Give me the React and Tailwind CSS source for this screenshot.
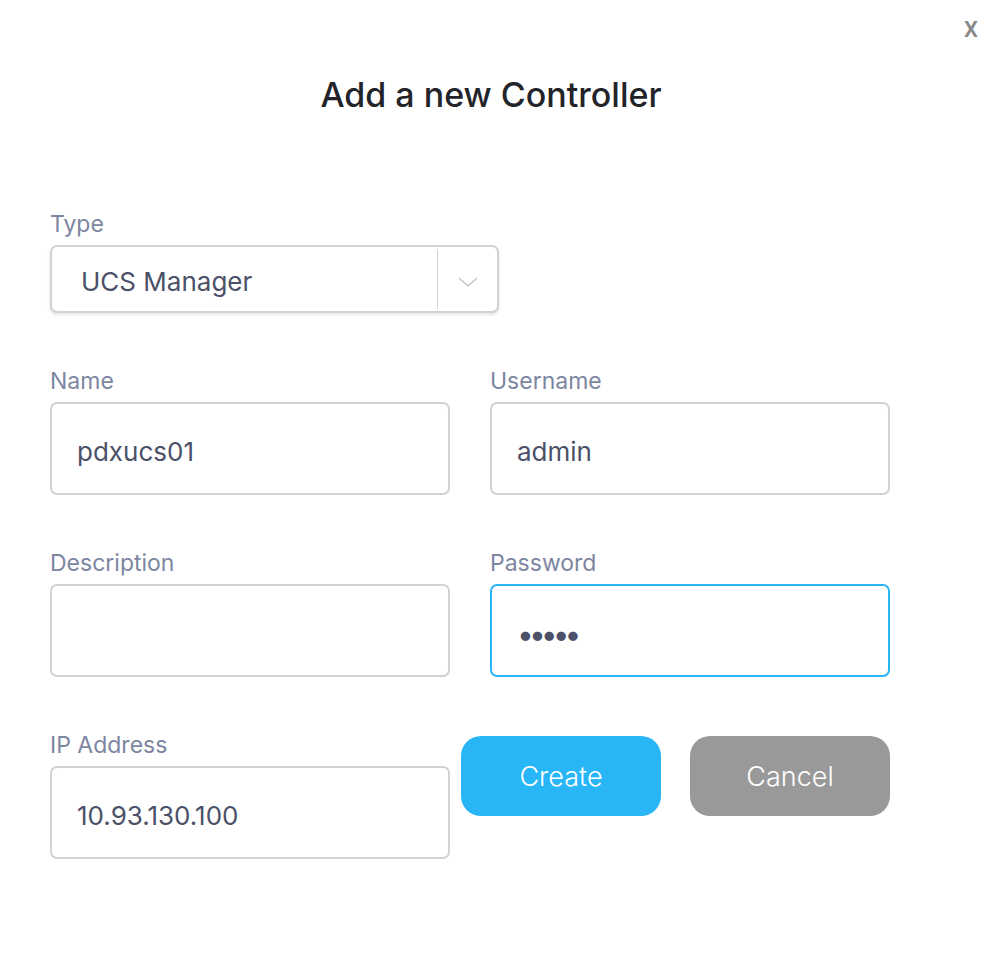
import React from "react";

const Label = ({ children }) => (
  <label className="block text-[23px] leading-[28px] text-[#7d86a1] mb-[7px]">{children}</label>
);

const Field = ({ label, value, type = "text", focused = false }) => (
  <div>
    <Label>{label}</Label>
    <input
      type={type}
      defaultValue={value}
      className={`w-full h-[93px] rounded-[7px] border-2 bg-white px-[25px] pt-[6px] text-[#4b5168] outline-none ${
        focused ? "border-[#29b6f6] text-[30px] tracking-[-5px]" : "border-[#d2d2d2] text-[26px]"
      }`}
    />
  </div>
);

export default function App() {
  return (
    <div className="relative min-h-[958px] w-full bg-white font-['Inter','Liberation_Sans',sans-serif]">
      {/* close */}
      <button className="absolute right-[14px] top-[17px] text-[22px] leading-[26px] font-semibold text-[#8a8a8a] font-['Roboto',sans-serif]">
        X
      </button>

      <div className="pt-[74px]">
        <h1 className="text-center text-[34px] leading-[42px] font-medium text-[#222429] -ml-[10px]">
          Add a new Controller
        </h1>
      </div>

      <form className="mt-[94px] pl-[50px] w-[890px]">
        {/* Type */}
        <div className="w-[449px]">
          <Label>Type</Label>
          <div className="flex h-[68px] items-center rounded-[7px] border-2 border-[#d2d2d2] bg-white shadow-[0_2px_3px_rgba(0,0,0,0.1)]">
            <span className="flex-1 pl-[29px] pt-[4px] text-[26px] text-[#4b5168]">UCS Manager</span>
            <div className="h-[60px] w-px bg-[#d2d2d2]"></div>
            <div className="flex w-[59px] items-center justify-center pt-[6px]">
              <svg width="20" height="10" viewBox="0 0 20 10" fill="none">
                <path d="M1 1 L10 9 L19 1" stroke="#c4c4c4" strokeWidth="1.4" />
              </svg>
            </div>
          </div>
        </div>

        <div className="mt-[54px] grid grid-cols-2 gap-x-[40px] gap-y-[54px]">
          <Field label="Name" value="pdxucs01" />
          <Field label="Username" value="admin" />
          <Field label="Description" value="" />
          <Field label="Password" value="abcde" type="password" focused />
          <Field label="IP Address" value="10.93.130.100" />
          <div className="flex justify-end gap-[29px] pt-[5px] -ml-[30px]">
            <button
              type="button"
              className="h-[80px] w-[200px] rounded-[20px] bg-[#29b6f6] pt-[2px] text-[27px] font-light text-white"
            >
              Create
            </button>
            <button
              type="button"
              className="h-[80px] w-[200px] rounded-[20px] bg-[#999999] pt-[2px] text-[27px] font-light text-white"
            >
              Cancel
            </button>
          </div>
        </div>
      </form>
    </div>
  );
}
